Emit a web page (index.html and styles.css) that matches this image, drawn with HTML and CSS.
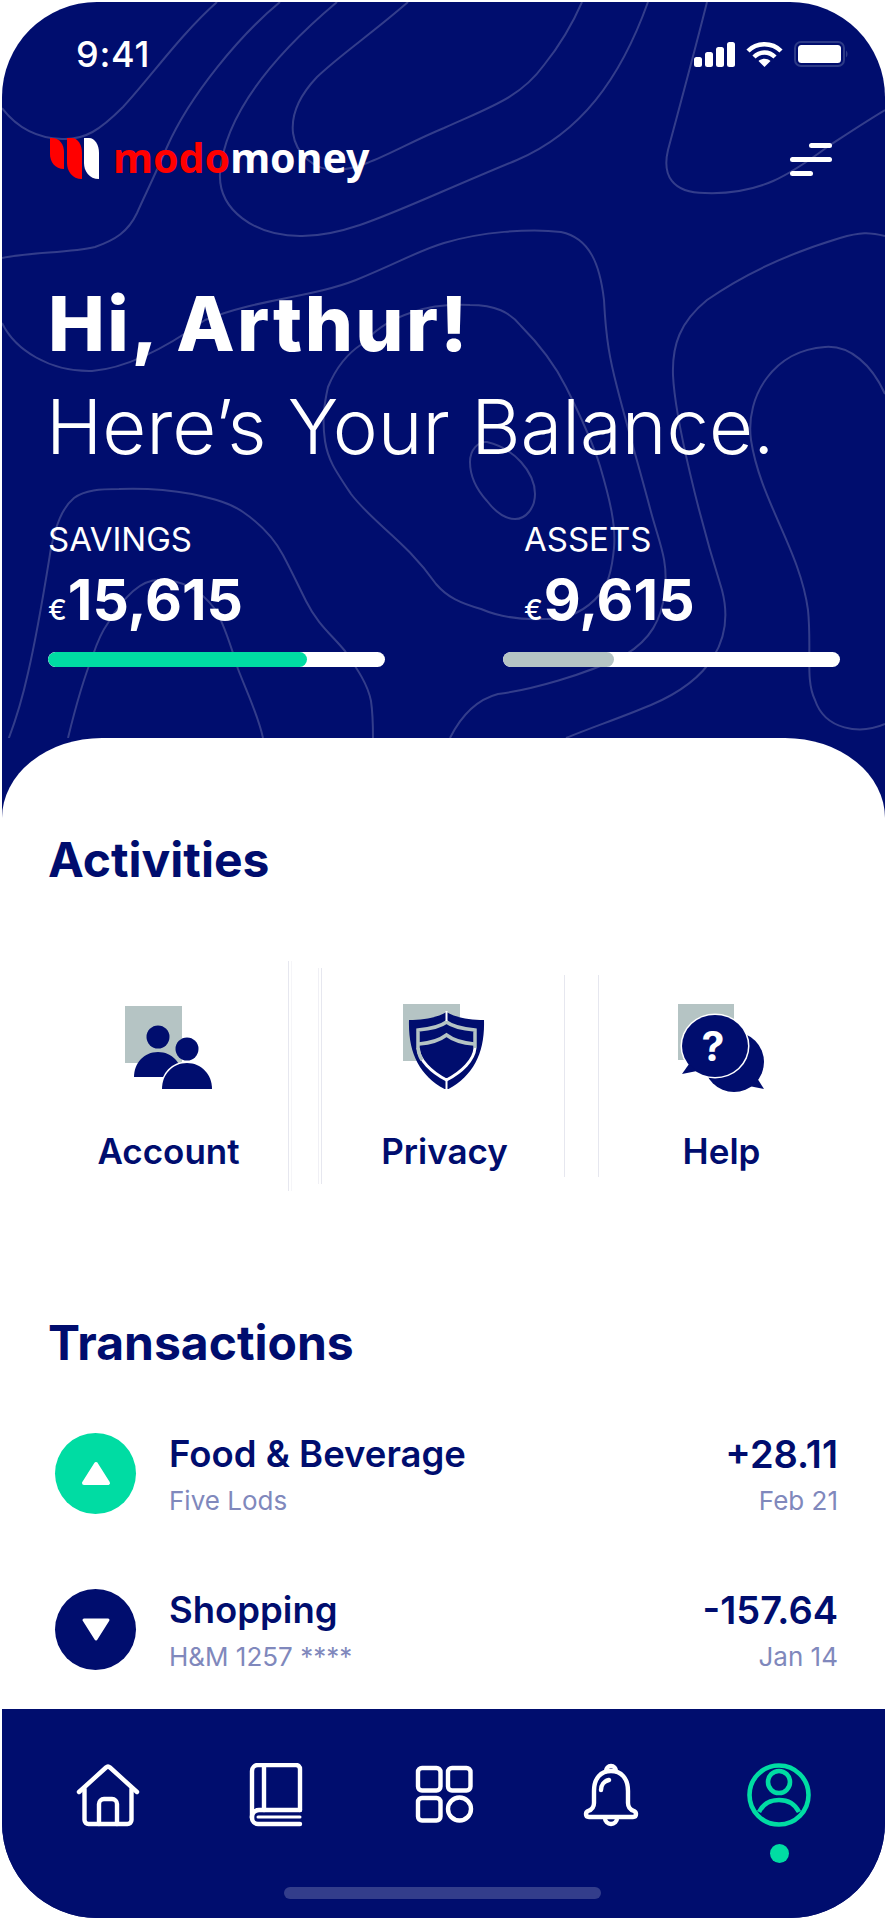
FILE: index.html
```html
<!DOCTYPE html>
<html lang="en">
<head>
    <meta charset="UTF-8">
    <meta name="viewport" content="width=device-width, initial-scale=1.0">
    <title>Modo Money</title>
    <link rel="stylesheet" href="styles.css">
</head>
<body>

<div class="phone">
    <!-- contour lines behind the header -->
    <svg class="contours" viewBox="2 2 883 736" fill="none">
        <path d="M217 2C180 35 150 78 123 107C100 130 85 140 62 139C35 138 15 125 2 108"/>
        <path d="M280 2C240 35 190 95 167 147C155 175 145 195 137 213C128 232 115 240 95 247C70 253 30 252 2 258"/>
        <path d="M337 2C280 50 225 110 220 173C218 210 255 236 300 236C350 237 400 208 517 160C580 133 620 80 648 2"/>
        <path d="M408 2C370 35 340 55 317 77C300 95 291 115 293 133C296 155 315 170 335 170C365 170 400 146 444 128C490 107 520 98 544 65C560 45 572 25 582 2"/>
        <path d="M707 2C695 50 680 105 668 150C662 175 672 193 705 193C760 195 790 175 830 145C850 132 865 122 885 110"/>
        <path d="M2 323C15 350 50 372 92 371C130 368 170 345 205 320C260 298 310 298 356 280C400 262 420 250 444 243C480 232 530 228 561 232C590 238 600 265 604 300C606 340 610 360 617 387C628 430 640 470 651 512C660 545 668 560 665 590C662 620 650 640 625 655C585 675 530 690 498 694C475 700 460 718 450 738"/>
        <path d="M885 236C870 232 860 232 840 238C800 250 750 270 707 300C680 322 672 345 673 375C675 420 700 520 722 590C735 640 710 680 651 705C620 718 590 728 566 738"/>
        <path d="M885 394C872 365 850 345 825 347C775 350 745 395 751 440C760 500 800 550 808 610C812 650 805 680 815 700C825 730 860 735 885 724"/>
        <path d="M470 305C495 305 510 312 521 326C540 345 555 365 566 387C580 415 592 440 600 466C610 500 616 525 614 548C612 570 608 585 600 594C585 612 565 620 543 619C515 620 495 615 481 609C460 603 447 597 436 584C405 540 375 525 351 494C335 470 328 460 325 441C322 420 324 405 328 387C335 370 345 355 362 344C380 325 395 318 413 312C430 306 450 304 470 305Z"/>
        <path d="M487 442C500 445 512 452 521 462C530 472 535 483 535 494C535 508 526 519 515 519C503 519 494 510 487 501C477 490 470 477 470 462C470 450 478 441 487 442Z"/>
        <path d="M2 755C15 725 22 700 28 673C38 630 45 585 51 548C56 525 62 508 74 498C85 490 100 489 119 489C145 488 170 490 192 494C215 499 230 503 243 512C262 525 275 540 283 555C292 572 298 585 306 601C318 625 332 635 345 651C358 670 368 685 371 701C373 715 373 725 373 738"/>
        <path d="M68 738C76 705 85 675 93 655C98 640 103 630 108 623C122 600 140 580 158 580C185 580 200 590 215 609C225 625 232 650 238 669C248 695 258 715 263 738"/>
    </svg>

    <section class="hero">
        <div class="status-bar">
            <span class="time">9:41</span>
            <div class="status-icons">
                <svg width="41" height="26" viewBox="0 0 41 26" fill="#fff">
                    <rect x="0" y="16" width="8" height="10" rx="2.5"/>
                    <rect x="11" y="11" width="8" height="15" rx="2.5"/>
                    <rect x="22" y="6" width="8" height="20" rx="2.5"/>
                    <rect x="33" y="1" width="8" height="25" rx="2.5"/>
                </svg>
                <svg width="37" height="26" viewBox="0 0 37 26" fill="none" stroke="#fff" stroke-width="4.5">
                    <path d="M2 10C11 1 26 1 35 10"/>
                    <path d="M8 16C14 10 23 10 29 16"/>
                    <path d="M18.5 26L12.5 20C16 17 21 17 24.5 20Z" fill="#fff" stroke="none"/>
                </svg>
                <svg width="54" height="26" viewBox="0 0 54 26" fill="none">
                    <rect x="1" y="1" width="49" height="24" rx="6" stroke="#2c3a86" stroke-width="2"/>
                    <rect x="4" y="4" width="43" height="18" rx="3.5" fill="#fff"/>
                    <path d="M52 9.5C54 11 54 15 52 16.5Z" fill="#2c3a86"/>
                </svg>
            </div>
        </div>

        <div class="brand-row">
            <div class="brand">
                <svg width="50" height="42" viewBox="0 0 50 42">
                    <path d="M0 0H2C10 0 14 7 14 14V31C5 31 0 24 0 16Z" fill="#ff0000"/>
                    <path d="M17 0H22C28 0 32 7 32 15V41C22 41 17 33 17 25Z" fill="#ff0000"/>
                    <path d="M34 0H39C45 0 49 7 49 15V41C39 41 34 33 34 25Z" fill="#fff"/>
                </svg>
                <span class="wordmark"><span class="wordmark-red">modo</span>money</span>
            </div>
            <div class="menu-btn">
                <span class="menu-line menu-top"></span>
                <span class="menu-line"></span>
                <span class="menu-line menu-short"></span>
            </div>
        </div>

        <h1 class="greeting">Hi, Arthur!</h1>
        <h2 class="subgreeting">Here’s Your Balance.</h2>

        <div class="balances">
            <div class="balance">
                <div class="balance-label">SAVINGS</div>
                <div class="balance-amount"><span class="currency">€</span>15,615</div>
                <div class="bar"><div class="bar-fill bar-green" style="width:77%"></div></div>
            </div>
            <div class="balance balance-assets">
                <div class="balance-label">ASSETS</div>
                <div class="balance-amount"><span class="currency">€</span>9,615</div>
                <div class="bar"><div class="bar-fill bar-grey" style="width:33%"></div></div>
            </div>
        </div>
    </section>

    <main class="sheet">
        <h3 class="section-title">Activities</h3>
        <div class="activities">
            <div class="activity">
                <svg width="100" height="90" viewBox="0 0 100 90">
                    <rect x="6" y="4" width="57" height="57" fill="#b5c4c4"/>
                    <circle cx="39" cy="35" r="11.5" fill="#000d6e"/>
                    <path d="M15 75C15 61 25 50 39 50C53 50 63 61 63 75Z" fill="#000d6e"/>
                    <circle cx="68" cy="47" r="11.5" fill="#000d6e"/>
                    <path d="M43 87C43 72 54 61 68 61C82 61 93 72 93 87Z" fill="#000d6e" stroke="#fff" stroke-width="3" paint-order="stroke"/>
                </svg>
                <span class="activity-name">Account</span>
            </div>
            <span class="rule rule-outer"></span>
            <span class="rule rule-mid"></span>
            <div class="activity activity-mid">
                <svg width="100" height="90" viewBox="0 0 100 90">
                    <rect x="8" y="2" width="57" height="57" fill="#b5c4c4"/>
                    <path d="M51.5 10C44 15 29 18 14 18C13 50 24 73 49.5 87H53.5C79 73 90 50 89 18C74 18 59 15 51.5 10Z" fill="#000d6e"/>
                    <path d="M23 46C24 58 36 70 51.5 78C67 70 79 58 80 46" fill="none" stroke="#fff" stroke-width="3"/>
                    <path d="M27 58C25 55 23.5 50 23 46V28C34 27 45 25 51.5 20C58 25 69 27 80 28V46" fill="none" stroke="#b5c4c4" stroke-width="3.5"/>
                    <path d="M24 42C36 41 45 38 51.5 33C58 38 67 41 79 42" fill="none" stroke="#b5c4c4" stroke-width="3.5"/>
                    <path d="M51.5 9V19M51.5 76V88" stroke="#fff" stroke-width="2"/>
                </svg>
                <span class="activity-name">Privacy</span>
            </div>
            <span class="rule rule-inner"></span>
            <span class="rule rule-inner"></span>
            <div class="activity activity-last">
                <svg width="100" height="90" viewBox="0 0 100 90">
                    <rect x="6" y="2" width="56" height="56" fill="#b5c4c4"/>
                    <circle cx="62" cy="60" r="30" fill="#000d6e"/>
                    <path d="M85 76L92 87L77 84Z" fill="#000d6e"/>
                    <ellipse cx="43" cy="44" rx="34.5" ry="32.5" fill="#fff"/>
                    <ellipse cx="43" cy="44" rx="33" ry="31" fill="#000d6e"/>
                    <path d="M17 62L10 72L25 69Z" fill="#000d6e"/>
                    <text class="help-mark" x="41" y="59" text-anchor="middle">?</text>
                </svg>
                <span class="activity-name">Help</span>
            </div>
        </div>

        <h3 class="section-title transactions-title">Transactions</h3>
        <div class="tx-list">
            <div class="tx">
                <span class="tx-icon tx-in">
                    <svg width="30" height="25" viewBox="0 0 30 25"><path d="M15 3L27 22H3Z" fill="#fff" stroke="#fff" stroke-width="4" stroke-linejoin="round"/></svg>
                </span>
                <div class="tx-body">
                    <div class="tx-title">Food &amp; Beverage</div>
                    <div class="tx-sub">Five Lods</div>
                </div>
                <div class="tx-right">
                    <div class="tx-title tx-amount">+28.11</div>
                    <div class="tx-sub">Feb 21</div>
                </div>
            </div>
            <div class="tx">
                <span class="tx-icon tx-out">
                    <svg width="30" height="25" viewBox="0 0 30 25"><path d="M15 22L27 3H3Z" fill="#fff" stroke="#fff" stroke-width="3" stroke-linejoin="round"/></svg>
                </span>
                <div class="tx-body">
                    <div class="tx-title">Shopping</div>
                    <div class="tx-sub">H&amp;M 1257 ****</div>
                </div>
                <div class="tx-right">
                    <div class="tx-title tx-amount">-157.64</div>
                    <div class="tx-sub">Jan 14</div>
                </div>
            </div>
        </div>
    </main>

    <nav class="tabbar">
        <div class="tabs">
            <svg class="tab" width="64" height="64" viewBox="0 0 64 64" fill="none" stroke="#fff" stroke-width="4.4" stroke-linecap="round" stroke-linejoin="round">
                <path d="M3 29L30 4.5a3 3 0 0 1 4 0L61 29"/>
                <path d="M8.5 26V57a4 4 0 0 0 4 4H51.5a4 4 0 0 0 4-4V26"/>
                <path d="M23 61V41a5 5 0 0 1 5-5h8a5 5 0 0 1 5 5V61"/>
            </svg>
            <svg class="tab" width="64" height="64" viewBox="-6 0 64 64" fill="none" stroke="#fff" stroke-width="4.4" stroke-linecap="round" stroke-linejoin="round">
                <path d="M50 47V6a4 4 0 0 0-4-4H8a6 6 0 0 0-6 6V55a6 6 0 0 0 6 6H50"/>
                <path d="M50 47H9a7 7 0 0 0-7 8"/>
                <path d="M14 3V47"/>
                <path d="M8 54H50" stroke-width="3"/>
            </svg>
            <svg class="tab" width="64" height="64" viewBox="-4 -3 64 64" fill="none" stroke="#fff" stroke-width="4.4">
                <rect x="2" y="2" width="22.5" height="22.5" rx="4"/>
                <rect x="32" y="2" width="22.5" height="22.5" rx="4"/>
                <rect x="2" y="32" width="22.5" height="22.5" rx="4"/>
                <circle cx="43.5" cy="43" r="11.5"/>
            </svg>
            <svg class="tab" width="64" height="64" viewBox="-5 0 64 64" fill="none" stroke="#fff" stroke-width="4.4" stroke-linecap="round" stroke-linejoin="round">
                <path d="M10 28C10 15 17 8 27 8C37 8 44 15 44 28V40C44 45 47 47 50 48Q52 49 52 51Q52 54 49 54H5Q2 54 2 51Q2 49 4 48C7 47 10 45 10 40Z"/>
                <path d="M22 8a5 5 0 0 1 10 0"/>
                <path d="M21 55a6 6 0 0 0 12 0"/>
                <path d="M17 27C17 22 20 18 25 17"/>
            </svg>
            <div class="tab tab-active">
                <svg width="64" height="64" viewBox="0 0 64 64" fill="none" stroke="#00dca3" stroke-width="4.6">
                    <circle cx="32" cy="32" r="29.5"/>
                    <circle cx="32" cy="19" r="11"/>
                    <path d="M12 49C16 41 23 37 32 37C41 37 48 41 52 49"/>
                </svg>
                <span class="tab-dot"></span>
            </div>
        </div>
        <div class="home-indicator"></div>
    </nav>
</div>

</body>
</html>
```

FILE: styles.css
```css
:root {
    --navy: #000d6e;
    --green: #00dca3;
    --grey: #b5c4c4;
    --muted: #8088bc;
}

* { box-sizing: border-box; }

body {
    margin: 0;
    padding: 2px;
    background: #fff;
    font-family: 'Inter', sans-serif;
    color: var(--navy);
}

.phone {
    position: relative;
    height: 1916px;
    display: flex;
    flex-direction: column;
    background: var(--navy);
    border-radius: 95px;
    overflow: hidden;
}

.contours {
    position: absolute;
    top: 0;
    left: 0;
    width: 883px;
    height: 736px;
}

.contours path {
    stroke: rgba(255, 255, 255, 0.2);
    stroke-width: 2;
}

/* Header */
.hero {
    position: relative;
    height: 736px;
    padding: 39px 0 0 46px;
    color: #fff;
}

.status-bar {
    display: flex;
    justify-content: space-between;
    align-items: center;
    height: 26px;
    padding: 0 37px 0 28px;
}

.time { font-size: 36px; font-weight: 500; letter-spacing: 0.7px; line-height: 26px; }

.status-icons { display: flex; gap: 11px; }

.brand-row {
    display: flex;
    justify-content: space-between;
    align-items: center;
    height: 42px;
    margin-top: 71px;
    padding: 0 53px 0 2px;
}

.brand { display: flex; align-items: center; gap: 13px; }

.wordmark {
    margin-top: -5px;
    font-family: 'Noto Sans', sans-serif;
    font-size: 41px;
    font-weight: 700;
    line-height: 42px;
}

.wordmark-red { color: #ff0000; }

.menu-btn {
    width: 42px;
    display: flex;
    flex-direction: column;
    gap: 9px;
}

.menu-line {
    display: block;
    height: 5px;
    background: #fff;
    border-radius: 3px;
}

.menu-top { width: 23px; margin-left: auto; }
.menu-short { width: 23px; }

.greeting {
    margin: 99px 0 0;
    font-size: 76px;
    font-weight: 800;
    letter-spacing: 2.4px;
    line-height: 88px;
}

.subgreeting {
    margin: 15px 0 0 -2px;
    font-size: 76px;
    font-weight: 300;
    line-height: 88px;
}

.balances {
    display: flex;
    gap: 118px;
    margin-top: 52px;
}

.balance { width: 337px; }

.balance-assets .balance-label,
.balance-assets .balance-amount { padding-left: 21px; }

.balance-label { font-size: 33px; line-height: 34px; }

.balance-amount {
    margin-top: 12px;
    font-size: 57px;
    font-weight: 700;
    line-height: 64px;
}

.currency { font-size: 28px; font-weight: 500; margin-right: 1px; }

.bar {
    height: 15px;
    margin-top: 10px;
    background: #fff;
    border-radius: 8px;
    overflow: hidden;
}

.bar-fill { height: 100%; border-radius: 8px; }
.bar-green { background: var(--green); }
.bar-grey { background: var(--grey); }

/* White sheet */
.sheet {
    flex: 1;
    position: relative;
    padding: 0 47px;
    background: #fff;
    border-radius: 100px 100px 0 0 / 80px 80px 0 0;
}

.section-title {
    margin: 94px 0 0 -1px;
    font-size: 48px;
    font-weight: 700;
    line-height: 56px;
}

.activities {
    display: flex;
    align-items: center;
    height: 230px;
    margin: 73px -6px 0 0;
}

.activity {
    flex: none;
    display: flex;
    flex-direction: column;
    align-items: center;
    align-self: flex-start;
    width: 239px;
    padding-top: 41px;
}

.activity-mid { width: 242px; padding-left: 3px; }
.activity-last { width: 245px; }

.activity-name {
    margin-top: 38px;
    font-size: 35px;
    font-weight: 600;
    line-height: 42px;
}

.help-mark {
    font-family: 'Inter', sans-serif;
    font-size: 41px;
    font-weight: 700;
    fill: #fff;
}

.rule {
    flex: none;
    width: 1px;
    background: #e6e7ef;
}

.rule-outer { height: 230px; margin-right: 32px; box-shadow: 3px 0 0 #f5f5f8; }
.rule-mid { height: 216px; box-shadow: -3px 0 0 #f0f0f5; }
.rule-inner { height: 202px; }
.rule-inner + .rule-inner { margin-left: 33px; }

.transactions-title { margin-top: 124px; }

.tx-list {
    display: flex;
    flex-direction: column;
    gap: 75px;
    margin-top: 62px;
}

.tx {
    display: flex;
    align-items: center;
    padding-left: 6px;
    height: 81px;
}

.tx-icon {
    flex: none;
    width: 81px;
    height: 81px;
    display: flex;
    align-items: center;
    justify-content: center;
    border-radius: 50%;
}

.tx-in { background: var(--green); }
.tx-out { background: var(--navy); }

.tx-body { flex: 1; margin-left: 33px; }
.tx-right { text-align: right; }

.tx-title { font-size: 36.5px; font-weight: 600; line-height: 44px; }
.tx-amount { font-size: 38px; }
.tx-sub { margin-top: 10px; font-size: 26px; color: var(--muted); line-height: 30px; }

/* Bottom bar */
.tabbar {
    flex: none;
    height: 209px;
    padding: 54px 74px 0;
    background: var(--navy);
}

.tabs {
    display: flex;
    justify-content: space-between;
    height: 106px;
}

.tab { flex: none; }

.tab-active {
    display: flex;
    flex-direction: column;
    align-items: center;
    width: 64px;
    gap: 17px;
}

.tab-dot {
    width: 19px;
    height: 19px;
    border-radius: 50%;
    background: var(--green);
}

.home-indicator {
    width: 317px;
    height: 12px;
    margin: 18px 0 0 208px;
    background: rgba(255, 255, 255, 0.2);
    border-radius: 6px;
}
```
